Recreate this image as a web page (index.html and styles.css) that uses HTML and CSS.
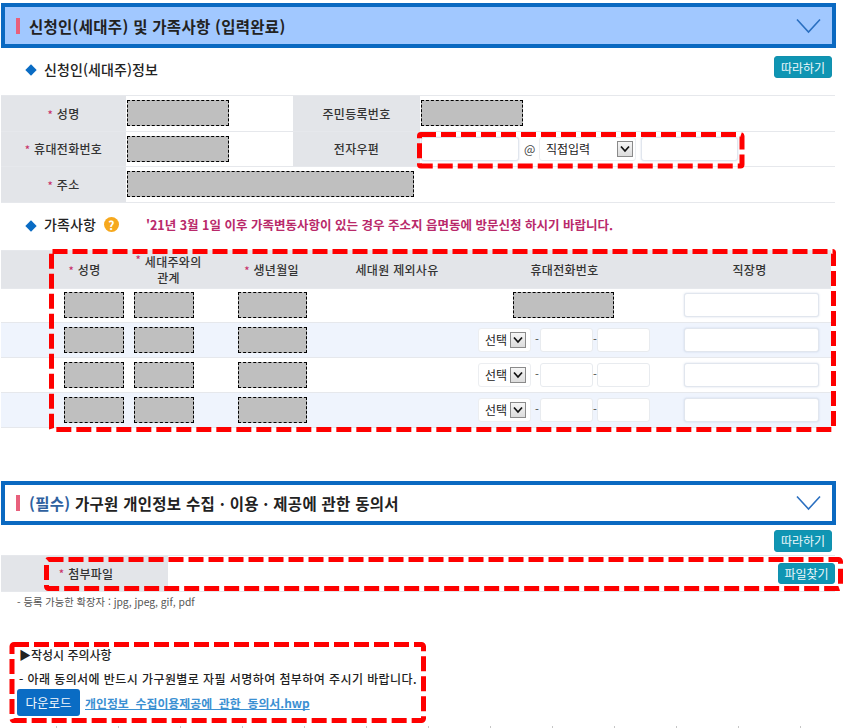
FILE: index.html
```html
<!DOCTYPE html>
<html lang="ko">
<head>
<meta charset="utf-8">
<title>신청인 및 가족사항</title>
<link rel="stylesheet" href="styles.css">
</head>
<body>
<div class="page">
  <header class="panel panel-filled">
    <span class="panel-bar"></span>
    <h2 class="panel-title">신청인(세대주) 및 가족사항 (입력완료)</h2>
    <svg class="chevron" width="25" height="16" viewBox="0 0 25 16"><path d="M1 1.5 12.5 14 24 1.5" fill="none" stroke="#2a6fc0" stroke-width="1.6"/></svg>
  </header>

  <div class="sub-row">
    <span class="diamond"></span>
    <h3 class="sub-title">신청인(세대주)정보</h3>
    <button class="btn btn-follow">따라하기</button>
  </div>

  <table class="grid grid-applicant">
    <colgroup><col class="a1"><col class="a2"><col class="a3"><col class="a4"></colgroup>
    <tr>
      <th><i>*</i> 성명</th>
      <td><div class="redact r102"></div></td>
      <th>주민등록번호</th>
      <td><div class="redact r102"></div></td>
    </tr>
    <tr>
      <th><i>*</i> 휴대전화번호</th>
      <td><div class="redact r102"></div></td>
      <th>전자우편</th>
      <td>
        <div class="email">
          <span class="field f-mail1"></span>
          <span class="at">@</span>
          <span class="select s-mail"><span class="select-text">직접입력</span><span class="arrow"><svg width="12" height="10" viewBox="0 0 12 10"><path d="M2 2.5 6 7l4-4.5" fill="none" stroke="#111" stroke-width="1.7"/></svg></span></span>
          <span class="field f-mail2"></span>
        </div>
      </td>
    </tr>
    <tr>
      <th><i>*</i> 주소</th>
      <td colspan="3"><div class="redact r287"></div></td>
    </tr>
  </table>

  <div class="family-row">
    <span class="diamond"></span>
    <h3 class="sub-title">가족사항</h3>
    <span class="help">?</span>
    <p class="family-note">'21년 3월 1일 이후 가족변동사항이 있는 경우 주소지 읍면동에 방문신청 하시기 바랍니다.</p>
  </div>

  <table class="grid grid-family">
    <colgroup><col class="b0"><col class="b1"><col class="b2"><col class="b3"><col class="b4"><col class="b5"><col class="b6"></colgroup>
    <tr class="head">
      <th></th>
      <th><i>*</i> 성명</th>
      <th class="two-line"><i class="raised">*</i> 세대주와의<br>관계</th>
      <th><i>*</i> 생년월일</th>
      <th>세대원 제외사유</th>
      <th>휴대전화번호</th>
      <th>직장명</th>
    </tr>
    <tr class="row-1">
      <td></td>
      <td><div class="redact r60 c-name"></div></td>
      <td><div class="redact r60 c-rel"></div></td>
      <td><div class="redact r69 c-birth"></div></td>
      <td></td>
      <td><div class="redact r101 c-phone"></div></td>
      <td><span class="field f-work"></span></td>
    </tr>
    <tr class="alt">
      <td></td>
      <td><div class="redact r60 c-name"></div></td>
      <td><div class="redact r60 c-rel"></div></td>
      <td><div class="redact r69 c-birth"></div></td>
      <td></td>
      <td>
        <div class="phone">
          <span class="select s-phone"><span class="select-text">선택</span><span class="arrow"><svg width="12" height="10" viewBox="0 0 12 10"><path d="M2 2.5 6 7l4-4.5" fill="none" stroke="#111" stroke-width="1.7"/></svg></span></span>
          <span class="dash d1">-</span><span class="field f-tel"></span><span class="dash">-</span><span class="field f-tel"></span>
        </div>
      </td>
      <td><span class="field f-work"></span></td>
    </tr>
    <tr>
      <td></td>
      <td><div class="redact r60 c-name"></div></td>
      <td><div class="redact r60 c-rel"></div></td>
      <td><div class="redact r69 c-birth"></div></td>
      <td></td>
      <td>
        <div class="phone">
          <span class="select s-phone"><span class="select-text">선택</span><span class="arrow"><svg width="12" height="10" viewBox="0 0 12 10"><path d="M2 2.5 6 7l4-4.5" fill="none" stroke="#111" stroke-width="1.7"/></svg></span></span>
          <span class="dash d1">-</span><span class="field f-tel"></span><span class="dash">-</span><span class="field f-tel"></span>
        </div>
      </td>
      <td><span class="field f-work"></span></td>
    </tr>
    <tr class="alt">
      <td></td>
      <td><div class="redact r60 c-name"></div></td>
      <td><div class="redact r60 c-rel"></div></td>
      <td><div class="redact r69 c-birth"></div></td>
      <td></td>
      <td>
        <div class="phone">
          <span class="select s-phone"><span class="select-text">선택</span><span class="arrow"><svg width="12" height="10" viewBox="0 0 12 10"><path d="M2 2.5 6 7l4-4.5" fill="none" stroke="#111" stroke-width="1.7"/></svg></span></span>
          <span class="dash d1">-</span><span class="field f-tel"></span><span class="dash">-</span><span class="field f-tel"></span>
        </div>
      </td>
      <td><span class="field f-work"></span></td>
    </tr>
  </table>

  <header class="panel panel-plain">
    <span class="panel-bar"></span>
    <h2 class="panel-title"><span class="required">(필수)</span> 가구원 개인정보 수집 · 이용 · 제공에 관한 동의서</h2>
    <svg class="chevron" width="25" height="16" viewBox="0 0 25 16"><path d="M1 1.5 12.5 14 24 1.5" fill="none" stroke="#2a6fc0" stroke-width="1.6"/></svg>
  </header>

  <div class="follow-row"><button class="btn btn-follow">따라하기</button></div>

  <div class="attach-row">
    <div class="attach-label"><i>*</i> 첨부파일</div>
    <button class="btn btn-file">파일찾기</button>
  </div>

  <p class="ext-note">- 등록 가능한 확장자 : jpg, jpeg, gif, pdf</p>

  <section class="notice">
    <p class="notice-title">▶작성시 주의사항</p>
    <p class="notice-line">- 아래 동의서에 반드시 가구원별로 자필 서명하여 첨부하여 주시기 바랍니다.</p>
    <div class="download">
      <button class="btn-download">다운로드</button>
      <a class="file-link" href="#">개인정보_수집이용제공에_관한_동의서.hwp</a>
    </div>
  </section>

  <div class="ticks"></div>

  <svg class="marks" width="843" height="728" viewBox="0 0 843 728">
    <g fill="none" stroke="#fe0000" stroke-width="5" stroke-dasharray="15 5">
      <rect x="419.5" y="134.5" width="322.5" height="31.5" rx="1.5"/>
      <rect x="51.5" y="251.5" width="782" height="178" rx="1"/>
      <rect x="46.5" y="559.5" width="794" height="29" rx="2"/>
      <rect x="12" y="644.5" width="411.5" height="76" rx="2"/>
    </g>
  </svg>
</div>
</body>
</html>
```

FILE: styles.css
```css
* { box-sizing: border-box; }
html, body { margin: 0; padding: 0; background: #fff; }
body {
  font-family: "Noto Sans CJK KR", "Noto Sans", "Liberation Sans", sans-serif;
  color: #222;
}
h2, h3, p { margin: 0; }
i { font-style: normal; color: #c8326a; font-size: 11px; }

.page {
  position: relative;
  width: 843px;
  height: 728px;
  padding-top: 3px;
  overflow: hidden;
}

/* section panels */
.panel {
  display: flex;
  align-items: center;
  width: 835px;
  margin-left: 1px;
  border: 4px solid #0a69c1;
  padding-left: 11px;
  padding-right: 11px;
}
.panel-filled { height: 45px; background: #a1c8ff; }
.panel-plain { height: 44px; margin-top: 53px; background: #fff; }
.panel-bar { width: 4px; height: 16px; background: #e8607c; flex: none; }
.panel-title {
  margin-left: 9px;
  font-size: 15.5px;
  font-weight: 700;
  color: #222;
  letter-spacing: 0.28px;
  white-space: nowrap;
}
.required { color: #2f619f; }
.chevron { margin-left: auto; flex: none; }

/* sub headings */
.sub-row {
  display: flex;
  align-items: flex-start;
  height: 47px;
  padding-left: 27px;
  padding-right: 11px;
}
.diamond {
  flex: none;
  width: 8px;
  height: 8px;
  margin-top: 19px;
  background: #0a6cc4;
  transform: rotate(45deg);
}
.sub-row .diamond { margin-top: 18px; }
.sub-title {
  margin-left: 9px;
  margin-top: 10px;
  font-size: 14px;
  font-weight: 500;
  line-height: 22px;
  color: #222;
  letter-spacing: 0.1px;
}
.btn {
  border: 1px solid #1290ae;
  border-radius: 3px;
  background: #0f95b3;
  color: #eef8fb;
  font: 400 12px "Noto Sans CJK KR", sans-serif;
  padding: 0;
  height: 22px;
  width: 58px;
}
.sub-row .btn { margin-left: auto; margin-top: 8px; }

/* tables */
.grid {
  border-collapse: collapse;
  table-layout: fixed;
  margin-left: 1px;
}
.grid th, .grid td {
  padding: 0;
  border-top: 1px solid #e6e8ec;
  border-bottom: 1px solid #e6e8ec;
}
.grid th {
  background: #e3e5e9;
  font-size: 12px;
  font-weight: 500;
  color: #333;
  text-align: center;
  letter-spacing: 0.3px;
}
.grid-applicant { width: 834px; }
.grid-applicant tr { height: 35.5px; }
.a1 { width: 125px; }
.a2 { width: 167px; }
.a3 { width: 127px; }
.a4 { width: 415px; }
.grid-applicant td { padding-left: 1px; }

.redact {
  height: 26px;
  background: #bfbfbf;
  border: 1px dashed #000;
}
.r102 { width: 102px; }
.r287 { width: 287px; }
.r60 { width: 60px; }
.r69 { width: 69px; }
.r101 { width: 101px; }

.email {
  display: flex;
  align-items: center;
  height: 28px;
}
.field {
  display: block;
  height: 24px;
  background: #fff;
  border: 1px solid #e1e6ee;
  border-radius: 3px;
  box-shadow: 0 0 2px rgba(120, 150, 190, 0.35);
}
.f-mail1 { width: 98px; }
.at { font-size: 12px; color: #444; width: 10px; margin: 0 5px; }
.f-mail2 { width: 97px; margin-left: 5px; }
.select {
  display: flex;
  align-items: center;
  height: 24px;
  background: #fff;
  border: 1px solid #eceef1;
  border-radius: 3px;
}
.select-text { font-size: 12px; color: #222; line-height: 1; }
.arrow {
  display: flex;
  align-items: center;
  justify-content: center;
  width: 16px;
  height: 16px;
  margin-left: auto;
  border: 1px solid #8a8a8a;
  background: linear-gradient(#f6f6f6, #dcdcdc);
}
.s-mail { width: 97px; padding: 0 2px 0 6px; }
.s-phone { width: 53px; padding: 0 4px 0 6px; }

.family-row {
  display: flex;
  align-items: flex-start;
  height: 47px;
  padding-left: 27px;
}
.help {
  flex: none;
  width: 15px;
  height: 15px;
  margin: 14px 0 0 8px;
  border-radius: 50%;
  background: #f6a81d;
  color: #fff;
  font-size: 12px;
  font-weight: 700;
  line-height: 15px;
  text-align: center;
}
.family-note {
  margin: 12px 0 0 27px;
  font-size: 12.5px;
  font-weight: 700;
  line-height: 20px;
  color: #b9296a;
  white-space: nowrap;
}

.grid-family { width: 830px; }
.b0 { width: 41px; }
.b1 { width: 85px; }
.b2 { width: 83px; }
.b3 { width: 123px; }
.b4 { width: 128px; }
.b5 { width: 207px; }
.b6 { width: 163px; }
.grid-family tr { height: 35px; }
.grid-family .head { height: 38px; }
.grid-family .row-1 { height: 34px; }
.grid-family .alt td { background: #eff4fd; }
.two-line { line-height: 15px; }
.raised { position: relative; top: -3px; }
.c-name { margin-left: 22px; }
.c-rel { margin-left: 7px; }
.c-birth { margin-left: 28px; }
.c-phone { margin-left: 52px; }
.f-work { width: 135px; margin-left: 16px; }
.phone {
  display: flex;
  align-items: center;
  padding-left: 17px;
}
.dash { font-size: 11px; color: #444; width: 4px; line-height: 1; }
.d1 { margin-left: 4px; width: 5px; }
.f-tel { width: 53px; border-color: #e8ebef; box-shadow: none; }

/* attachment */
.follow-row {
  display: flex;
  justify-content: flex-end;
  height: 30px;
  padding: 5px 11px 0 0;
}
.attach-row {
  display: flex;
  align-items: center;
  justify-content: space-between;
  width: 834px;
  height: 37px;
  margin-left: 1px;
  border-top: 1px solid #e6e8ec;
  border-bottom: 1px solid #e6e8ec;
}
.attach-label {
  align-self: stretch;
  display: flex;
  align-items: center;
  justify-content: center;
  gap: 4px;
  width: 167px;
  padding-left: 3px;
  background: #e3e5e9;
  font-size: 12px;
  font-weight: 500;
  color: #333;
  letter-spacing: 0.2px;
}
.btn-file { width: 57px; height: 21px; }
.ext-note {
  margin: 3px 0 0 17px;
  font-size: 10.3px;
  line-height: 14px;
  color: #555;
}

/* notice */
.notice { margin: 36px 0 0 19px; }
.notice-title, .notice-line {
  font-size: 12px;
  font-weight: 500;
  color: #222;
  line-height: 20px;
  white-space: nowrap;
}
.notice-line { margin-top: 4px; letter-spacing: 0.42px; }
.download {
  display: flex;
  align-items: center;
  gap: 5px;
  margin: 0 0 0 -2px;
}
.btn-download {
  width: 63px;
  height: 27px;
  border: 0;
  border-radius: 3px;
  background: #0a6cc4;
  color: #f2f7fc;
  font: 400 12.5px "Noto Sans CJK KR", sans-serif;
  padding: 0;
}
.file-link {
  font-size: 11.9px;
  font-weight: 700;
  color: #3b90d2;
  text-decoration: underline;
  text-decoration-skip-ink: none;
  white-space: nowrap;
}

.ticks {
  position: absolute;
  left: 0;
  right: 0;
  bottom: 0;
  height: 2px;
  background: linear-gradient(90deg, #c6c6c6 1px, transparent 1px) 56px 0 / 62px 100% repeat-x;
}
.marks { position: absolute; left: 0; top: 0; pointer-events: none; }
```
